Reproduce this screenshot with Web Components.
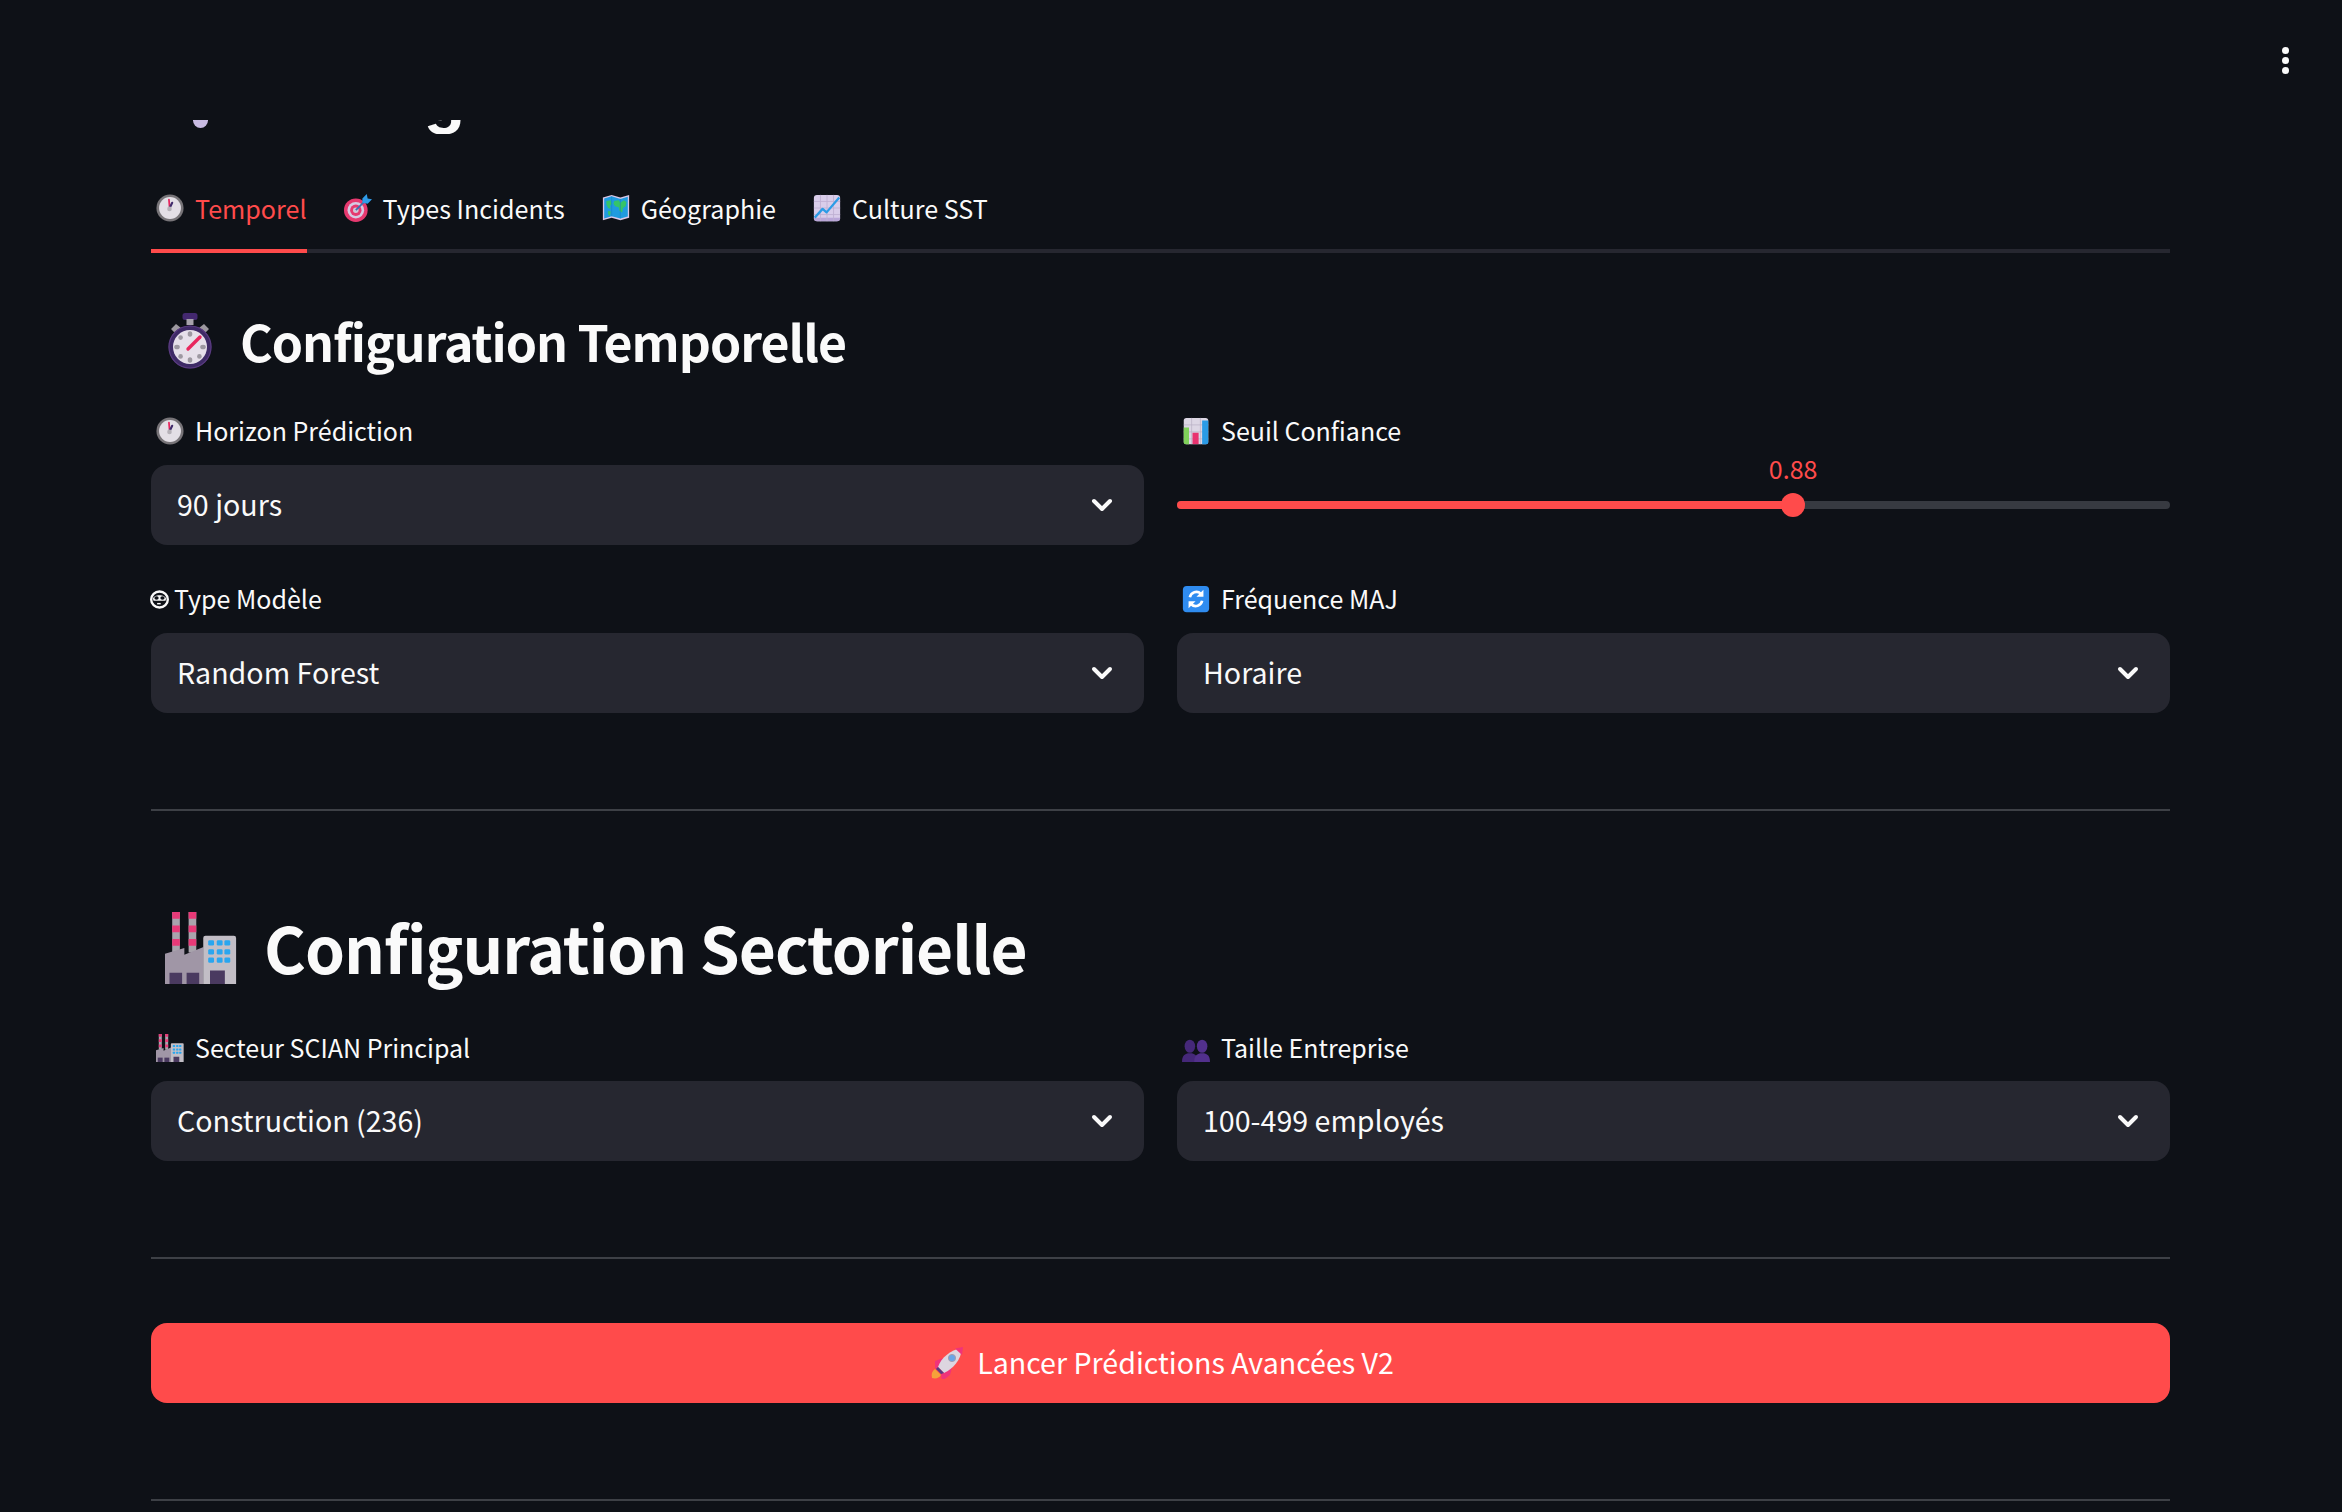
<!DOCTYPE html>
<html lang="fr">
<head>
<meta charset="utf-8">
<title>Configuration</title>
<style>
html,body{margin:0;padding:0;background:#0e1117;}
body{font-family:"Noto Sans CJK SC","Noto Sans",sans-serif;color:#fafafa;}
</style>
</head>
<body>
<x-app>
  <x-header slot="header"></x-header>
  <x-hero></x-hero>
  <x-tabs>
    <x-tab active icon="clock">Temporel</x-tab>
    <x-tab icon="target">Types Incidents</x-tab>
    <x-tab icon="map">Géographie</x-tab>
    <x-tab icon="chart">Culture SST</x-tab>
  </x-tabs>
  <x-heading icon="stopwatch" size="56" gap="26" style="--h:72px;--mt:52px;--mb:34px;--ml:15px;--up:3px">Configuration Temporelle</x-heading>
  <x-grid>
    <x-select icon="clock" label="Horizon Prédiction" value="90 jours"></x-select>
    <x-slider icon="bars" label="Seuil Confiance" value="0.88" pos="62.05"></x-slider>
    <x-select icon="face" label="Type Modèle" value="Random Forest"></x-select>
    <x-select icon="refresh" label="Fréquence MAJ" value="Horaire"></x-select>
  </x-grid>
  <x-rule style="--mt:96px;--mb:91px"></x-rule>
  <x-heading icon="factory" size="72" gap="27" style="--h:92px;--mt:0px;--mb:34px;--ml:14px;--fs:64px;--up:4px">Configuration Sectorielle</x-heading>
  <x-grid style="--lmb:13px">
    <x-select icon="factory" label="Secteur SCIAN Principal" value="Construction (236)"></x-select>
    <x-select icon="people" label="Taille Entreprise" value="100-499 employés"></x-select>
  </x-grid>
  <x-rule style="--mt:96px;--mb:64px"></x-rule>
  <x-button icon="rocket">Lancer Prédictions Avancées V2</x-button>
  <x-rule style="--mt:96px;--mb:0px"></x-rule>
</x-app>

<script>
const EMOJI = {
clock:`<circle cx="16" cy="16" r="15.5" fill="#777478"/><circle cx="16" cy="16" r="12.5" fill="#e3dfe6"/><path d="M15.6 16 14.8 6.5" stroke="#e8265e" stroke-width="2" stroke-linecap="round"/><path d="M15.6 16 18.5 10" stroke="#3f2a6b" stroke-width="2.4" stroke-linecap="round"/><circle cx="15.4" cy="17" r="2.6" fill="#b5b1b8"/>`,
target:`<circle cx="13.5" cy="18.5" r="13.5" fill="#e6396f"/><circle cx="13.5" cy="18.5" r="9.5" fill="#d6c9e2"/><circle cx="13.5" cy="18.5" r="6.5" fill="#e6396f"/><circle cx="13.5" cy="18.5" r="3.2" fill="#cfc6d6"/><path d="M13.5 18.5 25 7" stroke="#3d6fb0" stroke-width="2"/><path d="M21 5 26 0l1 5 5 1-5 5-6-1z" fill="#2f9be8"/>`,
map:`<path d="M1 4 11 1l10 3 10-3v26l-10 3-10-3-10 3z" fill="#d8c6e6"/><path d="M2.5 5 11 2.6 21 5.6l8.5-2.6v22.6L21 28 11 25.4 2.5 28z" fill="#1f9be0"/><path d="M5 8l5-1 1 4-2 3 1 3-3-1-2-4zM14 8l5-1 2 3 4-3 3 2-1 5-3 2-1 5-3-2-1-4-4-1-2-3zM7 19l3 1-1 5-2-2z" fill="#35c46a"/><path d="M11 2.6v22.8M21 5.6V28" stroke="#157fc0" stroke-width=".8" opacity=".7"/>`,
chart:`<rect x="1" y="1" width="30" height="30" rx="3.5" fill="#d9cdea"/><path d="M1 27h30v1a3 3 0 0 1-3 3H4a3 3 0 0 1-3-3z" fill="#b9a6d8"/><path d="M8.5 1v30M16 1v30M23.5 1v30M1 8.5h30M1 16h30M1 23.5h30" stroke="#bfb0d2" stroke-width="1"/><path d="M2 27 11 17l4.5 4L30 4" fill="none" stroke="#2c9ce6" stroke-width="2.6" stroke-linejoin="round"/>`,
stopwatch:`<rect x="16.5" y="0" width="15" height="7" rx="2.5" fill="#43286f"/><rect x="20.5" y="6" width="7" height="6" fill="#a7a3ab"/><path d="M5 16 10 11l5 4-5 6zM43 16l-5-5-5 4 5 6z" fill="#9c989f"/><circle cx="24" cy="34" r="21.5" fill="#3e2a66"/><circle cx="24" cy="34" r="21" fill="none" stroke="#5a3b80" stroke-width="1.2"/><circle cx="24" cy="34" r="17" fill="#e6e0ea"/><g fill="#9d98a1"><ellipse cx="24" cy="21" rx="2.3" ry="2.8"/><ellipse cx="24" cy="47" rx="2.3" ry="2.8"/><ellipse cx="11" cy="34" rx="2.8" ry="2.3"/><ellipse cx="37" cy="34" rx="2.8" ry="2.3"/><ellipse cx="14.6" cy="24.6" rx="2.3" ry="2.3"/><ellipse cx="33.4" cy="43.4" rx="2.3" ry="2.3"/><ellipse cx="14.6" cy="43.4" rx="2.3" ry="2.3"/></g><path d="M22 36 34 24" stroke="#e8265e" stroke-width="3.4" stroke-linecap="round"/>`,
bars:`<rect x="2" y="1" width="28" height="30" rx="3" fill="#dcd6e4"/><path d="M2 9h28M2 17h28M2 25h28M11 1v30M21 1v30" stroke="#b7b0c4" stroke-width=".8"/><path d="M2 12h6v19H4a2 2 0 0 1-2-2z" fill="#7fd05a"/><rect x="12" y="18" width="7" height="13" fill="#e8326f"/><path d="M23 4h7v25a2 2 0 0 1-2 2h-5z" fill="#2a9be6"/>`,
refresh:`<rect x="1" y="1" width="30" height="30" rx="4.5" fill="#2f8cf0"/><path d="M9 14a7.5 7.5 0 0 1 12.5-4" fill="none" stroke="#fff" stroke-width="3"/><path d="M24.5 5.5v8h-8z" fill="#fff"/><path d="M23 18a7.5 7.5 0 0 1-12.5 4" fill="none" stroke="#fff" stroke-width="3"/><path d="M7.5 26.5v-8h8z" fill="#fff"/>`,
factory:`<rect x="3.2" y="0" width="3.4" height="18" fill="#a9a4ad"/><rect x="10.5" y="0" width="3.4" height="18" fill="#a9a4ad"/><path d="M3.2 0h3.4v3H3.2zM3.2 6h3.4v3H3.2zM3.2 12h3.4v3H3.2zM10.5 0h3.4v3h-3.4zM10.5 6h3.4v3h-3.4zM10.5 12h3.4v3h-3.4z" fill="#e83a78"/><path d="M0 32V18.5L8.6 16v3l8.5-3.5V32z" fill="#a096a6"/><path d="M17 11.5a1 1 0 0 1 1-1h12.6a1 1 0 0 1 1 1V32H17z" fill="#c2bec6"/><g fill="#29a6ef"><rect x="19.2" y="12.5" width="2.6" height="2.4" rx=".6"/><rect x="23" y="12.5" width="2.6" height="2.4" rx=".6"/><rect x="26.4" y="12.5" width="2.6" height="2.4" rx=".6"/><rect x="19.2" y="16.5" width="2.6" height="2.4" rx=".6"/><rect x="23" y="16.5" width="2.6" height="2.4" rx=".6"/><rect x="26.4" y="16.5" width="2.6" height="2.4" rx=".6"/><rect x="19.2" y="20.2" width="2.6" height="2.4" rx=".6"/><rect x="23" y="20.2" width="2.6" height="2.4" rx=".6"/><rect x="26.4" y="20.2" width="2.6" height="2.4" rx=".6"/></g><rect x="2" y="27" width="5.6" height="5" fill="#4a3a60"/><rect x="9.6" y="27" width="5.6" height="5" fill="#4a3a60"/><rect x="20" y="26" width="6.6" height="6" fill="#4a3a60"/>`,
people:`<g transform="translate(0 4)"><g fill="#452879"><ellipse cx="9" cy="10" rx="6" ry="7.5"/><path d="M0 28c0-7 3-10 9-10s9 3 9 10z"/></g><g fill="#52308c"><ellipse cx="23" cy="10" rx="6" ry="7.5"/><path d="M14 28c0-7 3-10 9-10s9 3 9 10z"/></g></g>`,
rocket:`<path d="M1 31c-1-4 0-7 3-9l6 6c-2 3-5 4-9 3z" fill="#f5a13a"/><path d="M4 14l8-3-4 10 4 4 9-4-2 7-8 6-1-7-6-6z" fill="#f0337a"/><path d="M7 20C10 11 19 3 31 1c-1 12-9 21-18 25z" fill="#ddd6e0"/><path d="M24 1.5 32 0l-1 8z" fill="#f0337a"/><circle cx="21" cy="11" r="3.6" fill="#6aa5e6" stroke="#a59eb0"/><path d="M7 20l6 6-3 1-5-5z" fill="#5a3a80"/>`,
face:`<ellipse cx="16" cy="16" rx="14" ry="13.5" fill="none" stroke="#fafafa" stroke-width="4"/><path d="M5 15c1-8 21-8 22 0l-1 3H6z" fill="#fafafa"/><ellipse cx="11" cy="13.5" rx="3.6" ry="3" fill="#0e1117"/><ellipse cx="21" cy="13.5" rx="3.6" ry="3" fill="#0e1117"/><path d="M12 23h6" stroke="#fafafa" stroke-width="2.4"/>`
};
const VB = {stopwatch:"0 0 48 56"};

function def(name, html, init){
  customElements.define(name, class extends HTMLElement{
    constructor(){super();this.attachShadow({mode:"open"});}
    connectedCallback(){
      const a=n=>this.getAttribute(n)||"";
      this.shadowRoot.innerHTML = typeof html==="function"?html(a):html;
      if(init) init(this);
    }
  });
}

def("x-emoji", a=>`<style>:host{display:inline-flex;flex:none;width:var(--s,28px);height:var(--s,28px)}svg{width:100%;height:100%;display:block}</style>
<svg viewBox="${VB[a("name")]||"0 0 32 32"}" aria-hidden="true">${EMOJI[a("name")]||""}</svg>`);

def("x-app", `<style>
:host{display:block;position:relative;height:100vh;overflow:hidden;background:#0e1117;color:#fafafa;
font-family:"Noto Sans CJK SC","Noto Sans",sans-serif}
main{box-sizing:border-box;padding:0 172px 0 151px;display:block}
</style><slot name="header"></slot><main><slot></slot></main>`);

def("x-header", `<style>
:host{display:block;position:absolute;z-index:3;left:0;right:0;top:0;height:120px;background:#0e1117}
.menu{position:absolute;right:53px;top:46.5px;display:flex;flex-direction:column;gap:3px}
i{display:block;width:7px;height:7px;border-radius:50%;background:#fafafa}
</style><div class="menu"><i></i><i></i><i></i></div>`);

def("x-hero", `<style>
:host{display:block;height:134px;overflow:hidden;position:relative}
.row{display:flex;align-items:flex-end;height:134px;padding-left:42px}
.orb{width:15px;height:32px;flex:none;margin-bottom:6px;background:#c8bbe2;border-radius:0 0 8px 8px}
.g{font-family:Inter,"Noto Sans",sans-serif;font-size:64px;font-weight:700;line-height:64px;margin-left:216px;margin-bottom:4px;color:#fafafa}
</style><div class="row"><span class="orb"></span><span class="g">g</span></div>`);

def("x-tabs", `<style>
:host{display:flex;gap:32px;height:86px;margin-top:29px;border-bottom:4px solid #262730}
</style><slot></slot>`);

def("x-tab", a=>`<style>
:host{display:flex;align-items:center;height:90px;padding-top:4px;box-sizing:border-box;border-bottom:4px solid transparent;
font-size:25.1px;line-height:40px;color:#fafafa;white-space:nowrap}
:host([active]){color:#ff4b4b;border-bottom-color:#ff4b4b}
x-emoji{margin:0 11px 0 5px}
span{padding-bottom:1px}
</style><x-emoji name="${a("icon")}"></x-emoji><span><slot></slot></span>`);

def("x-heading", a=>`<style>
:host{display:flex;align-items:center;height:var(--h);margin:var(--mt) 0 var(--mb) var(--ml);
font-size:var(--fs,50px);font-weight:700;letter-spacing:-1px;line-height:1;color:#fafafa;white-space:nowrap}
x-emoji{--s:${a("size")}px;margin-right:${a("gap")}px}
span{padding-bottom:var(--up,0)}
</style><x-emoji name="${a("icon")}" style="width:${a("icon")==="stopwatch"?48:a("size")}px"></x-emoji><span><slot></slot></span>`);

def("x-grid", `<style>:host{display:grid;grid-template-columns:1fr 1fr;column-gap:33px;row-gap:34px}</style><slot></slot>`);

def("x-label", a=>{
  const face=a("icon")==="face";
  return `<style>
:host{display:flex;align-items:center;height:40px;margin-bottom:var(--lmb,14px);font-size:25px;line-height:40px;color:#fafafa;white-space:nowrap}
x-emoji{margin:${face?"0 5px 0 -1px":"0 11px 0 5px"};--s:${face?"19px":"28px"}}
span{padding-bottom:2px}
</style><x-emoji name="${a("icon")}"></x-emoji><span><slot></slot></span>`;
});

def("x-select", a=>`<style>
:host{display:block;min-width:0}
.box{display:flex;align-items:center;justify-content:space-between;box-sizing:border-box;height:80px;
padding:0 31px 0 26px;background:#262730;border-radius:16px;font-size:28.6px;line-height:44px;color:#fafafa}
span{padding-bottom:2px}
svg{width:22px;height:14px;display:block;fill:none;stroke:#fafafa;stroke-width:4;stroke-linecap:round;stroke-linejoin:round}
</style>
<x-label icon="${a("icon")}">${a("label")}</x-label>
<div class="box"><span>${a("value")}</span><svg viewBox="0 0 22 14"><path d="M3 3l8 8 8-8"/></svg></div>`);

def("x-slider", a=>`<style>
:host{display:block;min-width:0}
.box{position:relative;height:80px}
.track{position:absolute;left:0;right:0;top:36px;height:8px;border-radius:4px;background:#373a41}
.fill{position:absolute;left:0;top:0;bottom:0;width:${a("pos")}%;background:#ff4b4b;border-radius:4px}
.thumb{position:absolute;left:${a("pos")}%;top:50%;width:24px;height:24px;margin:-12px 0 0 -12px;border-radius:50%;background:#ff4b4b}
.val{position:absolute;left:${a("pos")}%;top:-17px;transform:translateX(-50%);font-size:25px;line-height:40px;color:#ff4b4b}
</style>
<x-label icon="${a("icon")}">${a("label")}</x-label>
<div class="box"><div class="track"><div class="fill"></div><div class="thumb"></div></div><span class="val">${a("value")}</span></div>`);

def("x-rule", `<style>:host{display:block;height:2px;background:#3d4046;margin:var(--mt) 0 var(--mb)}</style>`);

def("x-button", a=>`<style>
:host{display:flex;align-items:center;justify-content:center;height:80px;padding-left:4px;border-radius:16px;background:#ff4b4b;
color:#fff;font-size:28.6px;line-height:44px;white-space:nowrap}
x-emoji{--s:32px;margin-right:14px}
span{padding-bottom:2px}
</style><x-emoji name="${a("icon")}"></x-emoji><span><slot></slot></span>`);
</script>
</body>
</html>
